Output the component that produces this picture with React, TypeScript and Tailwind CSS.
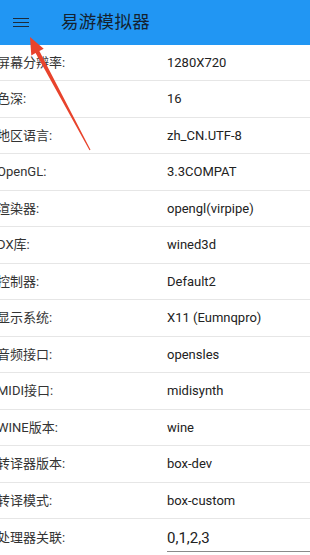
const rows: [string, string][] = [
  ['屏幕分辨率:', '1280X720'],
  ['色深:', '16'],
  ['地区语言:', 'zh_CN.UTF-8'],
  ['OpenGL:', '3.3COMPAT'],
  ['渲染器:', 'opengl(virpipe)'],
  ['DX库:', 'wined3d'],
  ['控制器:', 'Default2'],
  ['显示系统:', 'X11 (Eumnqpro)'],
  ['音频接口:', 'opensles'],
  ['MIDI接口:', 'midisynth'],
  ['WINE版本:', 'wine'],
  ['转译器版本:', 'box-dev'],
  ['转译模式:', 'box-custom'],
];

const font = { fontFamily: 'Roboto, "Noto Sans CJK SC", sans-serif' };

export default function App() {
  return (
    <div className="relative w-[310px] h-[555px] overflow-hidden bg-white" style={font}>
      <div className="h-[44.5px] bg-[#2196f3] flex items-center">
        <div className="w-[61px] pl-[13px] flex flex-col gap-[2.5px]">
          <span className="block w-4 h-[1.5px] bg-[#1c2b3a]" />
          <span className="block w-4 h-[1.5px] bg-[#1c2b3a]" />
          <span className="block w-4 h-[1.5px] bg-[#1c2b3a]" />
        </div>
        <span className="text-[17.5px] text-[#142230] font-normal tracking-[0.3px]">易游模拟器</span>
      </div>

      {rows.map(([label, value]) => (
        <div key={label} className="h-[36.5px] flex items-center border-b-[1.5px] border-[#e6e6e6] text-[13px]">
          <span className="w-[170px] -ml-[3px] text-[#333]">{label}</span>
          <span className="text-[#222]">{value}</span>
        </div>
      ))}

      <div className="h-[36.5px] flex items-center text-[13px]">
        <span className="w-[170px] -ml-[3px] text-[#333]">处理器关联:</span>
        <div className="flex-1 border-b border-[#8a8a8a] pt-[4px] pb-[1px]">
          <span className="text-[15px] text-[#222]">0,1,2,3</span>
        </div>
      </div>

      <svg className="absolute left-0 top-0 pointer-events-none" width="310" height="555">
        <polygon
          points="30,37 43.7,48.8 39.4,51.1 90.5,149.7 89.5,150.3 35.6,53.1 31.3,55.4"
          fill="#e8432c"
        />
      </svg>
    </div>
  );
}
